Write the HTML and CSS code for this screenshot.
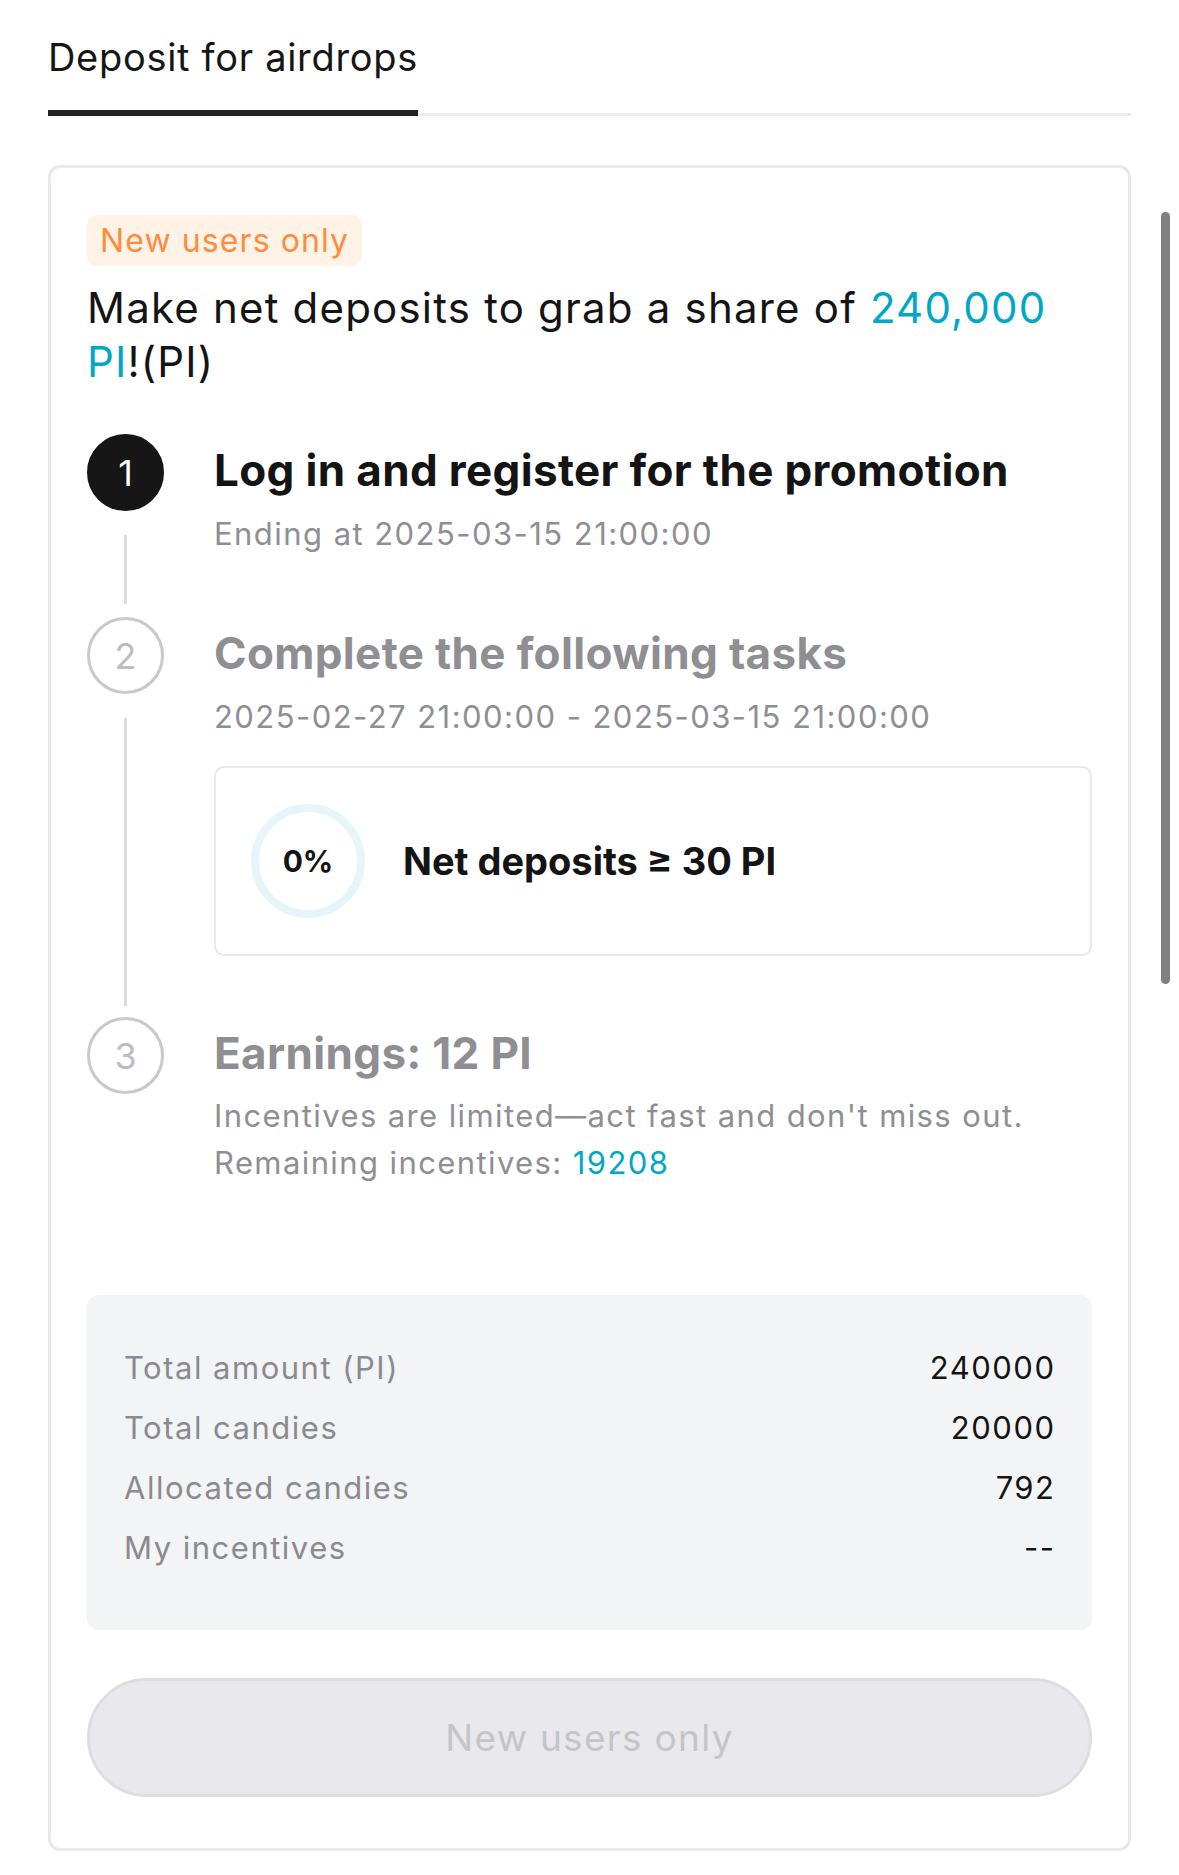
FILE: index.html
```html
<!DOCTYPE html>
<html lang="en">
<head>
<meta charset="utf-8">
<title>Deposit for airdrops</title>
<link rel="stylesheet" href="styles.css">
</head>
<body>
<div class="page">
  <div class="tabs">
    <div class="tab active">Deposit for airdrops</div>
    <div class="tab-fill"></div>
  </div>

  <div class="card">
    <span class="badge">New users only</span>
    <h1 class="headline">Make net deposits to grab a share of <span class="accent">240,000</span> <span class="nowrap"><span class="accent">PI</span>!(PI)</span></h1>

    <div class="steps">
      <div class="step">
        <div class="rail">
          <div class="num num-active">1</div>
          <div class="connector"></div>
        </div>
        <div class="step-body">
          <div class="step-title">Log in and register for the promotion</div>
          <div class="step-sub">Ending at 2025-03-15 21:00:00</div>
        </div>
      </div>

      <div class="step step-tasks">
        <div class="rail">
          <div class="num">2</div>
          <div class="connector"></div>
        </div>
        <div class="step-body">
          <div class="step-title muted">Complete the following tasks</div>
          <div class="step-sub">2025-02-27 21:00:00 - 2025-03-15 21:00:00</div>
          <div class="task">
            <div class="ring"><span>0%</span></div>
            <div class="task-label">Net deposits ≥ 30 PI</div>
          </div>
        </div>
      </div>

      <div class="step last">
        <div class="rail">
          <div class="num">3</div>
        </div>
        <div class="step-body">
          <div class="step-title muted">Earnings: 12 PI</div>
          <div class="step-text">Incentives are limited—act fast and don't miss out.<br>Remaining incentives: <span class="accent">19208</span></div>
        </div>
      </div>
    </div>

    <div class="stats">
      <div class="stat"><span class="stat-label">Total amount (PI)</span><span class="stat-value">240000</span></div>
      <div class="stat"><span class="stat-label">Total candies</span><span class="stat-value">20000</span></div>
      <div class="stat"><span class="stat-label">Allocated candies</span><span class="stat-value">792</span></div>
      <div class="stat"><span class="stat-label">My incentives</span><span class="stat-value">--</span></div>
    </div>

    <button class="cta" disabled>New users only</button>
  </div>
</div>
<div class="scroll-thumb"></div>
</body>
</html>
```

FILE: styles.css
```css
* { box-sizing: border-box; }

html, body {
  margin: 0;
  padding: 0;
  background: #ffffff;
}

body {
  font-family: Inter, "Noto Sans", "Liberation Sans", sans-serif;
  color: #141414;
  width: 1179px;
  height: 1875px;
  overflow: hidden;
  position: relative;
}

.page {
  padding: 32px 48px 0;
}

/* Tabs */
.tabs {
  display: flex;
  align-items: flex-end;
}

.tab {
  font-size: 38px;
  line-height: 50px;
  letter-spacing: 0.7px;
  padding-bottom: 28px;
  color: #161616;
  white-space: nowrap;
}

.tab.active {
  border-bottom: 6px solid #222326;
}

.tab-fill {
  flex: 1;
  border-bottom: 3px solid #ebebef;
}

/* Card */
.card {
  margin-top: 49px;
  border: 3px solid #e8e8ed;
  border-radius: 12px;
  padding: 47px 36px 47px;
  height: 1686px;
}

.badge {
  display: inline-block;
  background: #fff3e8;
  color: #ff8b3d;
  font-size: 32px;
  line-height: 51px;
  letter-spacing: 1.1px;
  padding: 0 13px;
  border-radius: 10px;
}

.headline {
  margin: 15px 0 0;
  font-size: 42px;
  line-height: 54px;
  letter-spacing: 1.2px;
  font-weight: 400;
  color: #141414;
}

.nowrap {
  white-space: nowrap;
}

.accent {
  color: #00a7c7;
}

/* Steps */
.steps {
  margin-top: 45px;
  display: flex;
  flex-direction: column;
}

.step {
  display: flex;
  gap: 50px;
  padding-bottom: 63px;
}

.step.step-tasks {
  padding-bottom: 61px;
}

.step.last {
  padding-bottom: 0;
}

.rail {
  width: 77px;
  flex: none;
  display: flex;
  flex-direction: column;
  align-items: center;
  margin-bottom: -50px;
}

.step.last .rail {
  margin-bottom: 0;
}

.num {
  width: 77px;
  height: 77px;
  flex: none;
  border-radius: 50%;
  border: 3px solid #c9c9cd;
  color: #bdbdc1;
  font-size: 36px;
  display: flex;
  align-items: center;
  justify-content: center;
}

.num-active {
  background: #161616;
  border-color: #161616;
  color: #ffffff;
}

.connector {
  flex: 1;
  width: 3px;
  background: #dcdcdf;
  margin: 24px 0 0;
}

.step-body {
  flex: 1;
  min-width: 0;
}

.step-title {
  font-size: 44px;
  line-height: 72px;
  letter-spacing: 0.35px;
  font-weight: 700;
  color: #141414;
  white-space: nowrap;
}

.step-title.muted {
  color: #8e8e93;
}

.step-sub {
  margin-top: 8px;
  font-size: 31px;
  line-height: 40px;
  letter-spacing: 1.45px;
  color: #8e8e93;
}

.step-text {
  margin-top: 3px;
  font-size: 31px;
  line-height: 47px;
  letter-spacing: 1.4px;
  color: #8e8e93;
  white-space: nowrap;
}

/* Task */
.task {
  margin-top: 29px;
  height: 190px;
  border: 2px solid #e8e8ed;
  border-radius: 10px;
  display: flex;
  align-items: center;
  padding: 0 35px;
  gap: 38px;
}

.ring {
  width: 114px;
  height: 114px;
  flex: none;
  border-radius: 50%;
  border: 8px solid #e5f5f9;
  display: flex;
  align-items: center;
  justify-content: center;
  font-size: 30px;
  font-weight: 700;
  color: #141414;
}

.task-label {
  font-size: 38px;
  font-weight: 700;
  color: #141414;
}

/* Stats */
.stats {
  margin-top: 109px;
  background: #f3f4f6;
  border-radius: 12px;
  padding: 42px 38px 53px 37px;
}

.stat {
  display: flex;
  justify-content: space-between;
  align-items: center;
  height: 60px;
  font-size: 31px;
  letter-spacing: 1.5px;
}

.stat-label {
  color: #8a8a8f;
}

.stat-value {
  color: #141414;
  margin-right: -1.5px;
}

/* Button */
.cta {
  display: block;
  width: 100%;
  margin-top: 48px;
  height: 119px;
  border-radius: 60px;
  border: 3px solid #dedee1;
  background: #e9e9ed;
  color: #c4c4c9;
  font-family: inherit;
  font-size: 37px;
  letter-spacing: 1.3px;
}

/* Scroll indicator overlay */
.scroll-thumb {
  position: absolute;
  left: 1161px;
  top: 212px;
  width: 9px;
  height: 772px;
  border-radius: 5px;
  background: #808080;
}
```
